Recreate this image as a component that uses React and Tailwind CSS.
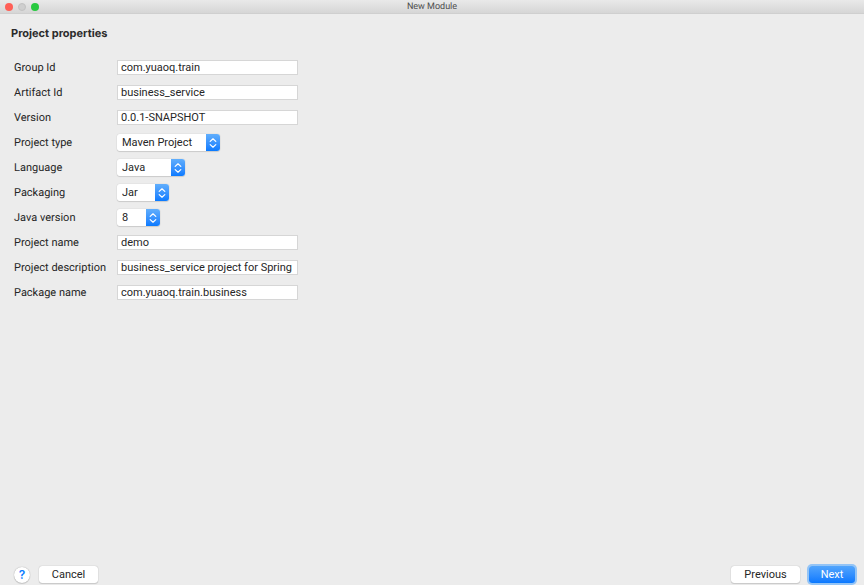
import { useState } from "react";

const fields = [
  { id: "groupId", label: "Group Id", value: "com.yuaoq.train" },
  { id: "artifactId", label: "Artifact Id", value: "business_service" },
  { id: "version", label: "Version", value: "0.0.1-SNAPSHOT" },
  { id: "projectType", label: "Project type", value: "Maven Project", options: ["Maven Project"], width: "w-[103px]" },
  { id: "language", label: "Language", value: "Java", options: ["Java"], width: "w-[68px]" },
  { id: "packaging", label: "Packaging", value: "Jar", options: ["Jar"], width: "w-[52px]" },
  { id: "javaVersion", label: "Java version", value: "8", options: ["8"], width: "w-[43px]" },
  { id: "projectName", label: "Project name", value: "demo" },
  { id: "description", label: "Project description", value: "business_service project for Spring" },
  { id: "packageName", label: "Package name", value: "com.yuaoq.train.business" },
];

const SelectField = ({ id, value, options, width, onChange }) => (
  <div className={`relative h-[17px] rounded-[3px] shadow-[0_0_1px_rgba(0,0,0,0.3),0_1px_1px_rgba(0,0,0,0.12)] ${width}`}>
    <select
      id={id}
      value={value}
      onChange={onChange}
      className="block h-full w-full appearance-none rounded-[3px] bg-white pl-[5px] text-[11px] leading-4 outline-none"
    >
      {options.map((option) => (
        <option key={option}>{option}</option>
      ))}
    </select>
    <span className="pointer-events-none absolute inset-y-0 right-0 flex w-[14px] items-center justify-center rounded-r-[3px] bg-linear-to-b from-[#60aefc] to-[#067aff]">
      <svg viewBox="0 0 8 12" className="h-3 w-2" fill="none" stroke="white" strokeWidth="1.2" strokeLinecap="round" strokeLinejoin="round">
        <path d="M1.2 4.4 4 1.8l2.8 2.6M1.2 7.6 4 10.2l2.8-2.6" />
      </svg>
    </span>
  </div>
);

const App = () => {
  const [values, setValues] = useState(Object.fromEntries(fields.map((field) => [field.id, field.value])));

  const handleChange = (id) => (event) => setValues({ ...values, [id]: event.target.value });

  return (
    <div className="flex min-h-screen flex-col bg-[#ececec] font-['Roboto',sans-serif] text-[11px] leading-4 text-[#262626] [text-rendering:geometricPrecision]">
      {/* Title bar */}
      <header className="grid h-[14px] grid-cols-[1fr_auto_1fr] items-center border-b border-[#cfcfcf] bg-linear-to-b from-[#e9e9e9] to-[#d6d6d6] px-[5px]">
        <div className="flex gap-[5px]">
          <button aria-label="Close" className="size-2 rounded-full bg-[#ff5f57]" />
          <button aria-label="Minimize" className="size-2 rounded-full border border-[#c2c2c2] bg-[#cfcfcf]" />
          <button aria-label="Zoom" className="size-2 rounded-full bg-[#28c940]" />
        </div>
        <h1 className="text-[9px] leading-[14px] text-[#4d4d4d]">New Module</h1>
      </header>

      <main className="flex-1 px-[11px] pt-[11px]">
        <h2 className="font-['Inter',sans-serif] font-bold text-[#2b2b2b]">Project properties</h2>
        <form className="mt-[14px] pl-[3px]">
          {fields.map((field) => (
            <div key={field.id} className="flex h-[25px] items-center">
              <label htmlFor={field.id} className="w-[103px] shrink-0 whitespace-nowrap">
                {field.label}
              </label>
              {field.options ? (
                <SelectField {...field} value={values[field.id]} onChange={handleChange(field.id)} />
              ) : (
                <input
                  id={field.id}
                  type="text"
                  value={values[field.id]}
                  onChange={handleChange(field.id)}
                  className="h-[15px] w-[181px] border border-[#d6d6d6] bg-white pl-[3px] outline-none"
                />
              )}
            </div>
          ))}
        </form>
      </main>

      <footer className="flex items-center px-2">
        <button
          aria-label="Help"
          className="ml-[6px] size-4 rounded-full bg-white text-center font-['Inter',sans-serif] text-[12px] font-semibold leading-4 text-[#0a7cff] shadow-[0_0_1px_rgba(0,0,0,0.4),0_1px_1px_rgba(0,0,0,0.12)]"
        >
          ?
        </button>
        <button className="ml-[9px] h-[17px] w-[59px] rounded-[3px] bg-white shadow-[0_0_1px_rgba(0,0,0,0.35),0_1px_1px_rgba(0,0,0,0.12)]">
          Cancel
        </button>
        <button className="ml-auto h-[17px] w-[69px] rounded-[3px] bg-white shadow-[0_0_1px_rgba(0,0,0,0.35),0_1px_1px_rgba(0,0,0,0.12)]">
          Previous
        </button>
        <button className="my-[2px] mr-px ml-[9px] h-[17px] w-[46px] rounded-[3px] bg-linear-to-b from-[#51a5fc] to-[#0678ff] text-white ring-2 ring-[#93c4f6]">
          Next
        </button>
      </footer>
    </div>
  );
};

export default App;
